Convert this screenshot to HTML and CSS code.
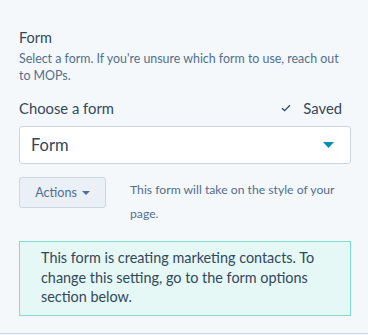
FILE: index.html
```html
<!DOCTYPE html>
<html>
<head>
<meta charset="utf-8">
<link rel="stylesheet" href="styles.css">
</head>
<body>
<div class="panel">
  <div class="section-title">Form</div>
  <div class="section-desc">Select a form. If you're unsure which form to use, reach out to MOPs.</div>
  <div class="field-head">
    <span class="field-label">Choose a form</span>
    <span class="saved"><svg class="check" width="10" height="8" viewBox="0 0 10 8"><path d="M1 4.2 L3.6 6.6 L9 1.2" fill="none" stroke="#33475b" stroke-width="1.3"/></svg>Saved</span>
  </div>
  <div class="select">
    <span class="select-value">Form</span>
    <svg class="caret" width="11" height="6" viewBox="0 0 11 6"><path d="M0 0 H11 L5.5 6 Z" fill="#0091ae"/></svg>
  </div>
  <div class="actions-row">
    <div class="btn">Actions<svg class="btn-caret" width="8" height="4" viewBox="0 0 8 4"><path d="M0 0 H8 L4 4 Z" fill="#506e91"/></svg></div>
    <div class="helper">This form will take on the style of your page.</div>
  </div>
  <div class="alert">This form is creating marketing contacts. To change this setting, go to the form options section below.</div>
</div>
</body>
</html>
```
FILE: styles.css
```css
html, body {
  margin: 0;
  padding: 0;
  background: #f5f8fa;
}
body {
  font-family: Lato, "Open Sans", sans-serif;
  color: #33475b;
  width: 368px;
  height: 335px;
  overflow: hidden;
}
.panel {
  padding: 29px 17px 0 19px;
  height: 304px;
  border-bottom: 1px solid #cbd6e2;
}
.section-title {
  font-size: 14.5px;
  line-height: 18px;
}
.section-desc {
  font-size: 12.4px;
  line-height: 17px;
  color: #516f90;
  margin-top: 3px;
}
.field-head {
  display: flex;
  justify-content: space-between;
  align-items: center;
  margin-top: 15px;
  font-size: 14.8px;
  line-height: 18px;
  padding-right: 9px;
}
.saved {
  display: flex;
  align-items: center;
  gap: 12px;
}
.select {
  margin-top: 9px;
  height: 36px;
  background: #fff;
  border: 1px solid #cbd6e2;
  border-radius: 3px;
  display: flex;
  align-items: center;
  justify-content: space-between;
  padding: 0 16px 0 11px;
}
.select-value {
  font-size: 16.5px;
}
.actions-row {
  display: flex;
  align-items: flex-start;
  margin-top: 13px;
  gap: 24px;
}
.btn {
  flex: none;
  width: 85px;
  height: 29px;
  background: #eaf0f6;
  border: 1px solid #cbd6e2;
  border-radius: 3px;
  display: flex;
  align-items: center;
  justify-content: center;
  gap: 5px;
  font-size: 12.6px;
  color: #506e91;
}
.helper {
  font-size: 12.2px;
  line-height: 24px;
  color: #516f90;
  margin-top: 1px;
}
.alert {
  margin-top: 15px;
  background: #e5f8f6;
  border: 1px solid #7fded2;
  padding: 6px 20px 8px 21px;
  font-size: 14.4px;
  line-height: 19.5px;
  color: #33475b;
}
```
